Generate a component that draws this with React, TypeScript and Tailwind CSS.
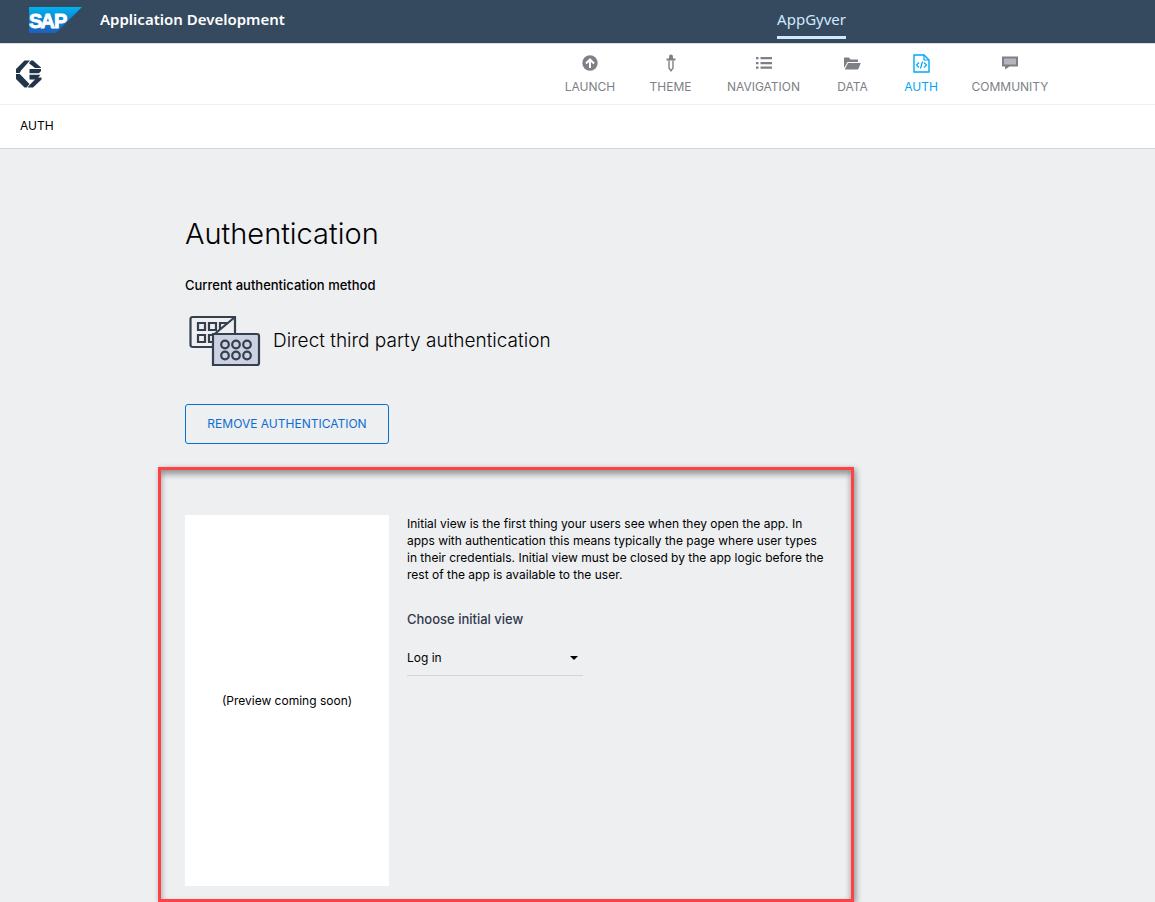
import type { ReactNode } from "react";

function SapLogo() {
  return (
    <svg width="53" height="26" viewBox="0 0 53 26" role="img" aria-label="SAP">
      <defs>
        <linearGradient id="sap" x1="0" y1="0" x2="0" y2="1">
          <stop offset="0" stopColor="#00b4ee" />
          <stop offset="0.5" stopColor="#0a83d6" />
          <stop offset="1" stopColor="#1e5fbb" />
        </linearGradient>
      </defs>
      <path d="M0 0H53L27 26H0Z" fill="url(#sap)" />
      <text
        x="0"
        y="20.500"
        fill="#fff"
        stroke="#fff"
        strokeWidth="0.9"
        fontFamily="Liberation Sans, sans-serif"
        fontSize="20"
        fontWeight="700"
      >
        <tspan x="0">S</tspan>
        <tspan x="11.500">A</tspan>
        <tspan x="25">P</tspan>
      </text>
    </svg>
  );
}

function ComposerLogo() {
  return (
    <svg width="26" height="28" viewBox="0 0 26 28" fill="#223548" aria-hidden="true">
      <path d="M8.500 0.500H14L5 10.500L3.800 13H0V9Z" />
      <path d="M15 0.500H17L25 7.500V8H19L13 3.200Z" />
      <path d="M0 14H3.800L13.500 24L10.500 27.500H8.500L0 19Z" />
      <path d="M14.500 24L21 17.500H25.500V19.500L17 27.500H11.500Z" />
      <path d="M13.500 9H25V11L23 13.200H13.500Z" />
      <path d="M13.500 14.800H24.500L20.500 19.500H13.500Z" />
    </svg>
  );
}

function LaunchIcon() {
  return (
    <svg width="16" height="16" viewBox="0 0 16 16" fill="none" aria-hidden="true">
      <circle cx="8" cy="8" r="7.700" fill="currentColor" />
      <path d="M8 13V4.500M4 8.500L8 4.500L12 8.500" stroke="#fff" strokeWidth="2" />
    </svg>
  );
}

function ThemeIcon() {
  return (
    <svg width="10" height="18" viewBox="0 0 10 18" fill="none" aria-hidden="true">
      <path d="M3 5V2.500Q3 0.500 5 0.500T7 2.500V5Z" fill="currentColor" />
      <path d="M0.500 4.500H9.500V6.500H0.500Z" fill="currentColor" />
      <path d="M3 6.500V14L5 16.800L7 14V6.500" stroke="currentColor" strokeWidth="1.400" />
    </svg>
  );
}

function NavigationIcon() {
  return (
    <svg width="16" height="12" viewBox="0 0 16 12" fill="currentColor" aria-hidden="true">
      <path d="M0 0H2.500V2.200H0ZM0 5H2.500V7.200H0ZM0 9.500H2.500V11.700H0ZM4.500 0H16V2.200H4.500ZM4.500 5H16V7.200H4.500ZM4.500 9.500H16V11.700H4.500Z" />
    </svg>
  );
}

function DataIcon() {
  return (
    <svg width="17" height="13" viewBox="0 0 17 13" fill="currentColor" aria-hidden="true">
      <path d="M0 1Q0 0.500 0.500 0.500H5L6.500 2.500H14V5H3.500L0.500 10.500H0Z" />
      <path d="M4 6H16.800L14.200 12.500H0.800Z" />
    </svg>
  );
}

function AuthIcon() {
  return (
    <svg width="17" height="19" viewBox="0 0 17 19" fill="none" stroke="currentColor" aria-hidden="true">
      <path d="M1 1H11L16 6V18H1Z" strokeWidth="1.400" />
      <path d="M11 1V6H16" strokeWidth="1.200" />
      <path d="M6 8.500L3.500 11L6 13.500M11 8.500L13.500 11L11 13.500M9.500 7.500L7.500 14.500" strokeWidth="1.200" />
    </svg>
  );
}

function CommunityIcon() {
  return (
    <svg width="16" height="14" viewBox="0 0 16 14" fill="none" aria-hidden="true">
      <path d="M0 0.500H16V10.500H7.500L3 13.500V10.500H0Z" fill="currentColor" />
      <path d="M2 2.500H14V8.500H2Z" fill="#b4b6bb" />
    </svg>
  );
}

function MethodIcon() {
  return (
    <svg width="72" height="52" viewBox="0 0 72 52" fill="none" stroke="#353f4f" strokeWidth="2.200" aria-hidden="true">
      <path d="M24 32H4Q1.500 32 1.500 30V4Q1.500 2 4 2H46V18M46 2L25 19.500" />
      <path d="M9 8H16V15H9ZM20 8H27V15H20ZM38 8H31V14M9 20H16V27H9ZM25 20H20V27H25" />
      <path d="M24 19H68Q70 19 70 21V48Q70 50 68 50H24Z" fill="#ccd2e1" />
      {[36, 47, 58].map((x) => (
        <g key={x}>
          <circle cx={x} cy="29.500" r="3.800" />
          <circle cx={x} cy="40.500" r="3.800" />
        </g>
      ))}
    </svg>
  );
}

type Item = { label: string; width: string; icon: ReactNode; active?: boolean };

const items: Item[] = [
  { label: "LAUNCH", width: "w-[50px]", icon: <LaunchIcon /> },
  { label: "THEME", width: "w-[41px]", icon: <ThemeIcon /> },
  { label: "NAVIGATION", width: "w-[75px]", icon: <NavigationIcon /> },
  { label: "DATA", width: "w-[33px]", icon: <DataIcon /> },
  { label: "AUTH", width: "w-[34px]", icon: <AuthIcon />, active: true },
  { label: "COMMUNITY", width: "w-[74px]", icon: <CommunityIcon /> },
];

export default function App() {
  return (
    <div className="min-h-screen bg-[#eeeff1] font-['Inter',sans-serif] text-xs text-black">
      <header className="flex h-[43px] items-start bg-[#354a5f] pl-[29px] pr-[309px] font-['Noto_Sans',sans-serif] text-[15px]">
        <div className="pt-[7px]">
          <SapLogo />
        </div>
        <span className="ml-[18px] pt-[7px] leading-6 font-semibold text-white">Application Development</span>
        <a href="#appgyver" className="ml-auto h-[39px] border-b-[3px] border-[#d1e8ff] pt-[7px] leading-6 text-[#d1e8ff]">
          AppGyver
        </a>
      </header>

      <div className="flex h-[62px] items-start border-t border-b border-t-[#d9dce1] border-b-[#f0f0f1] bg-white pl-4 pr-[108px]">
        <a href="#home" aria-label="Home" className="pt-4">
          <ComposerLogo />
        </a>
        <nav className="ml-auto flex gap-[35px] pt-2">
          {items.map((item) => (
            <a
              key={item.label}
              href={"#" + item.label.toLowerCase()}
              aria-current={item.active ? "page" : undefined}
              className={`flex flex-col items-center ${item.width} ${item.active ? "text-[#00a8f3]" : "text-[#7d8087]"}`}
            >
              <span className="flex h-[22px] items-center">{item.icon}</span>
              <span className="mt-[5px] leading-4">{item.label}</span>
            </a>
          ))}
        </nav>
      </div>

      <div className="flex h-11 items-center border-b border-[#d4d6db] bg-white pb-px pl-5">AUTH</div>

      <main className="pl-[185px] pt-[63px]">
        <h1 className="text-[29px] leading-[44px] font-light">Authentication</h1>
        <h2 className="mt-[21px] text-[13px] leading-4 font-medium">Current authentication method</h2>
        <div className="mt-[22px] flex items-center pl-1">
          <MethodIcon />
          <p className="ml-3 text-[19px] leading-7 font-light">Direct third party authentication</p>
        </div>
        <button
          type="button"
          className="mt-[37px] block h-10 w-[204px] rounded-[3px] border border-[#0a6ed1] text-[#0a6ed1]"
        >
          REMOVE AUTHENTICATION
        </button>

        <section className="mt-[23px] -ml-[27px] flex max-w-[696px] gap-[18px] border-[3px] border-[#ff4143] px-6 pt-[45px] pb-[13px] shadow-[2px_2px_6px_rgba(0,0,0,0.4),inset_0_4px_6px_rgba(0,0,0,0.4)]">
          <div className="flex h-[371px] w-[204px] shrink-0 items-center justify-center bg-white">
            (Preview coming soon)
          </div>
          <div className="flex-1">
            <p className="max-w-[428px] leading-[17px]">
              Initial view is the first thing your users see when they open the app. In apps with authentication
              this means typically the page where user types in their credentials. Initial view must be closed by
              the app logic before the rest of the app is available to the user.
            </p>
            <label htmlFor="initial-view" className="mt-7 block text-[13px] leading-4 font-medium text-[#32384c]">
              Choose initial view
            </label>
            <div className="mt-4 grid w-44 items-center border-b border-[#d3d4d7] pb-0.5">
              <select
                id="initial-view"
                className="col-start-1 row-start-1 h-[30px] w-full appearance-none bg-transparent"
              >
                <option>Log in</option>
              </select>
              <svg
                width="8"
                height="4"
                viewBox="0 0 8 4"
                aria-hidden="true"
                className="pointer-events-none col-start-1 row-start-1 mr-[5px] justify-self-end"
              >
                <path d="M0 0H8L4 4Z" />
              </svg>
            </div>
          </div>
        </section>
      </main>
    </div>
  );
}
